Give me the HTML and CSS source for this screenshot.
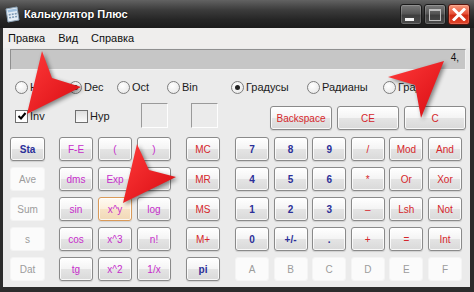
FILE: index.html
```html
<!DOCTYPE html>
<html lang="ru">
<head>
    <meta charset="UTF-8">
    <title>Калькулятор Плюс</title>
    <link rel="stylesheet" href="styles.css">
</head>
<body>
    <div class="window">
        <div class="titlebar">
            <svg class="app-icon" width="17" height="17" viewBox="0 0 17 17">
                <path d="M2 3 L13 1 L15 14 L4 16 Z" fill="#e4edf5" stroke="#8ea4b8" stroke-width="1"/>
                <path d="M3.5 4 L12.5 2.4 L13 5 L4 6.6 Z" fill="#9fc0de"/>
                <g fill="#7d99b4">
                    <rect x="4.6" y="8" width="2" height="1.6" transform="rotate(-10 5 8)"/>
                    <rect x="7.6" y="7.5" width="2" height="1.6" transform="rotate(-10 8 7.5)"/>
                    <rect x="10.6" y="7" width="2" height="1.6" transform="rotate(-10 11 7)"/>
                    <rect x="5" y="11" width="2" height="1.6" transform="rotate(-10 5 11)"/>
                    <rect x="8" y="10.5" width="2" height="1.6" transform="rotate(-10 8 10.5)"/>
                    <rect x="11" y="10" width="2" height="1.6" transform="rotate(-10 11 10)"/>
                </g>
            </svg>
            <span class="title">Калькулятор Плюс</span>
            <div class="caption-buttons">
                <span class="cap-btn min"><span class="min-bar"></span></span>
                <span class="cap-btn max"><span class="max-box"></span></span>
                <span class="cap-btn close">
                    <svg width="14" height="13" viewBox="0 0 14 13">
                        <path d="M2 1.5 L12 11.5 M12 1.5 L2 11.5" stroke="#fff" stroke-width="3" stroke-linecap="square"/>
                    </svg>
                </span>
            </div>
        </div>

        <div class="client">
            <div class="menubar">
                <span>Правка</span>
                <span>Вид</span>
                <span>Справка</span>
            </div>

            <div class="content">
                <div class="display">4,</div>

                <div class="modes">
                    <div class="radio-group base">
                        <label class="radio"><span class="circle"></span>Hex</label>
                        <label class="radio"><span class="circle on"></span>Dec</label>
                        <label class="radio"><span class="circle"></span>Oct</label>
                        <label class="radio"><span class="circle"></span>Bin</label>
                    </div>
                    <div class="radio-group angle">
                        <label class="radio"><span class="circle on"></span>Градусы</label>
                        <label class="radio"><span class="circle"></span>Радианы</label>
                        <label class="radio"><span class="circle"></span>Грады</label>
                    </div>
                </div>

                <div class="controls">
                    <div class="flags">
                        <label class="check inv">
                            <span class="box">
                                <svg width="10" height="10" viewBox="0 0 10 10">
                                    <path d="M1.5 5 L4 7.5 L8.5 2" fill="none" stroke="#000" stroke-width="2"/>
                                </svg>
                            </span>Inv
                        </label>
                        <label class="check hyp"><span class="box"></span>Hyp</label>
                        <span class="sunken first"></span>
                        <span class="sunken"></span>
                    </div>
                    <div class="clear-keys">
                        <span class="key red">Backspace</span>
                        <span class="key red">CE</span>
                        <span class="key red">C</span>
                    </div>
                </div>

                <div class="keypad">
                    <div class="block stat">
                        <span class="key blue">Sta</span>
                        <span class="key off">Ave</span>
                        <span class="key off">Sum</span>
                        <span class="key off">s</span>
                        <span class="key off">Dat</span>
                    </div>
                    <div class="block func">
                        <span class="key pink">F-E</span>
                        <span class="key pink">(</span>
                        <span class="key pink">)</span>
                        <span class="key pink">dms</span>
                        <span class="key pink">Exp</span>
                        <span class="key pink">ln</span>
                        <span class="key pink">sin</span>
                        <span class="key pink focus">x^y</span>
                        <span class="key pink">log</span>
                        <span class="key pink">cos</span>
                        <span class="key pink">x^3</span>
                        <span class="key pink">n!</span>
                        <span class="key pink">tg</span>
                        <span class="key pink">x^2</span>
                        <span class="key pink">1/x</span>
                    </div>
                    <div class="block mem">
                        <span class="key red">MC</span>
                        <span class="key red">MR</span>
                        <span class="key red">MS</span>
                        <span class="key red">M+</span>
                        <span class="key blue">pi</span>
                    </div>
                    <div class="block num">
                        <span class="key blue">7</span>
                        <span class="key blue">8</span>
                        <span class="key blue">9</span>
                        <span class="key red">/</span>
                        <span class="key red">Mod</span>
                        <span class="key red">And</span>

                        <span class="key blue">4</span>
                        <span class="key blue">5</span>
                        <span class="key blue">6</span>
                        <span class="key red">*</span>
                        <span class="key red">Or</span>
                        <span class="key red">Xor</span>

                        <span class="key blue">1</span>
                        <span class="key blue">2</span>
                        <span class="key blue">3</span>
                        <span class="key red">–</span>
                        <span class="key red">Lsh</span>
                        <span class="key red">Not</span>

                        <span class="key blue">0</span>
                        <span class="key blue">+/-</span>
                        <span class="key blue">.</span>
                        <span class="key red">+</span>
                        <span class="key red">=</span>
                        <span class="key red">Int</span>

                        <span class="key off">A</span>
                        <span class="key off">B</span>
                        <span class="key off">C</span>
                        <span class="key off">D</span>
                        <span class="key off">E</span>
                        <span class="key off">F</span>
                    </div>
                </div>
            </div>
        </div>

        <!-- red pointers drawn over the screenshot -->
        <svg class="arrows" width="474" height="292" viewBox="0 0 474 292">
            <defs>
                <linearGradient id="red" x1="0" y1="0" x2="1" y2="1">
                    <stop offset="0" stop-color="#ff3a3a"/>
                    <stop offset="1" stop-color="#d80c12"/>
                </linearGradient>
            </defs>
            <polygon points="42,51 52,78 81,87 27,114" fill="url(#red)"/>
            <polygon points="444,61 388,77 415,85 421,118" fill="url(#red)"/>
            <polygon points="137,144 149,170 176,177 123,203" fill="url(#red)"/>
        </svg>
    </div>
</body>
</html>
```

FILE: styles.css
```css
body {
    margin: 0;
    padding: 0;
    font-family: "Liberation Sans", Arial, sans-serif;
    background: #2a2a2a;
}
.window {
    position: relative;
    width: 474px;
    height: 292px;
    background: #2c2c2c;
    overflow: hidden;
}
.titlebar {
    height: 28px;
    display: flex;
    align-items: center;
    background: linear-gradient(#626262, #3c3c3c 35%, #262626 70%, #1c1c1c);
}
.app-icon {
    margin-left: 4px;
    margin-top: 1px;
}
.title {
    margin-left: 3px;
    color: #fff;
    font-size: 11px;
    font-weight: bold;
    text-shadow: 0 0 2px #000;
}
.caption-buttons {
    margin-left: auto;
    margin-right: 4px;
    display: flex;
    gap: 2px;
    align-self: flex-start;
    margin-top: 4px;
}
.cap-btn {
    width: 22px;
    height: 21px;
    box-sizing: border-box;
    border: 1px solid #1a1a1a;
    border-radius: 3px;
    background: linear-gradient(#7a7a7a, #555 45%, #3e3e3e 55%, #4c4c4c);
    box-shadow: inset 0 0 0 1px rgba(255, 255, 255, 0.18);
    display: flex;
    align-items: center;
    justify-content: center;
}
.min-bar {
    width: 9px;
    height: 3px;
    background: #f4f4f4;
    margin-top: 9px;
    margin-right: 4px;
}
.max-box {
    width: 10px;
    height: 9px;
    border: 1px solid #bdbdbd;
    border-top-width: 2px;
}
.cap-btn.close {
    background: linear-gradient(#f79a7c, #e8533a 45%, #d02a12 55%, #e2452a);
    border-color: #5a140c;
}
.client {
    margin: 0 4px 0 3px;
    height: 259px;
    background: #ebebeb;
}
.menubar {
    height: 20px;
    display: flex;
    align-items: center;
    gap: 13px;
    padding-left: 5px;
    font-size: 11px;
    color: #111;
    background: #efeeed;
}
.content {
    padding: 1px 4px 0 7px;
}
.display {
    height: 19px;
    border: 1px solid;
    border-color: #8f8f8f #f2f2f2 #f2f2f2 #8f8f8f;
    background: #c6c6c6;
    font-size: 10px;
    color: #111;
    text-align: right;
    padding-right: 6px;
    line-height: 16px;
}
.modes {
    display: flex;
    margin-top: 10px;
    padding-left: 5px;
    height: 14px;
}
.radio-group {
    display: grid;
    align-items: center;
}
.radio-group.base {
    grid-template-columns: 54px 48px 50px 64px;
}
.radio-group.angle {
    grid-template-columns: 76px 76px auto;
}
.radio {
    display: flex;
    align-items: center;
    font-size: 11px;
    color: #1a1a1a;
}
.circle {
    width: 11px;
    height: 11px;
    border: 1px solid #7d7d7d;
    border-radius: 50%;
    background: radial-gradient(circle at 40% 35%, #fff, #e4e4e4);
    margin-right: 2px;
    display: flex;
    align-items: center;
    justify-content: center;
}
.circle.on::after {
    content: "";
    width: 5px;
    height: 5px;
    border-radius: 50%;
    background: #222;
}
.controls {
    display: flex;
    align-items: flex-start;
    margin-top: 9px;
}
.flags {
    display: flex;
    align-items: center;
    height: 24px;
    padding-left: 5px;
}
.check {
    display: flex;
    align-items: center;
    font-size: 11px;
    color: #1a1a1a;
    margin-top: 2px;
}
.check.inv {
    width: 60px;
}
.check.hyp {
    width: 66px;
}
.box {
    width: 11px;
    height: 11px;
    border: 1px solid #6f6f6f;
    background: linear-gradient(#dedede, #fafafa);
    margin-right: 2px;
    display: flex;
    align-items: center;
    justify-content: center;
}
.check.inv .box {
    background: #fff;
}
.sunken {
    width: 25px;
    height: 23px;
    border: 1px solid;
    border-color: #9a9a9a #fdfdfd #fdfdfd #9a9a9a;
}
.sunken.first {
    margin-right: 23px;
}
.clear-keys {
    margin-left: auto;
    margin-top: 3px;
    display: grid;
    grid-template-columns: repeat(3, 62px);
    column-gap: 5px;
}
.keypad {
    display: flex;
    margin-top: 7px;
}
.block {
    display: grid;
    grid-auto-rows: 24px;
    row-gap: 6px;
}
.stat {
    grid-template-columns: 35px;
}
.func {
    margin-left: 14px;
    grid-template-columns: repeat(3, 34px);
    column-gap: 5px;
}
.mem {
    margin-left: 15px;
    grid-template-columns: 34px;
}
.num {
    margin-left: 15px;
    grid-template-columns: repeat(6, 34px);
    column-gap: 4.6px;
}
.key {
    box-sizing: border-box;
    height: 24px;
    display: flex;
    align-items: center;
    justify-content: center;
    font-size: 10px;
    border: 1px solid #8a8a8a;
    border-radius: 3px;
    background: linear-gradient(#ffffff, #f4f4f4 48%, #e4e4e4 52%, #d9d9d9);
    box-shadow: inset 0 0 0 1px rgba(255, 255, 255, 0.8), 0 1px 1px rgba(0, 0, 0, 0.12);
}
.key.red {
    color: #d5262b;
}
.key.blue {
    color: #2b2f99;
    font-weight: bold;
}
.key.pink {
    color: #c62ccb;
}
.key.focus {
    border-color: #d99a5a;
    background: linear-gradient(#fffaf2, #fcefdc 48%, #f7e2c5 52%, #f1d9b8);
}
.key.off {
    border-color: #f4f4f4;
    background: #fbfbfb;
    color: #9c9c9c;
    box-shadow: none;
}
.arrows {
    position: absolute;
    left: 0;
    top: 0;
    pointer-events: none;
    filter: drop-shadow(2px 2px 2px rgba(0, 0, 0, 0.45));
}
```
